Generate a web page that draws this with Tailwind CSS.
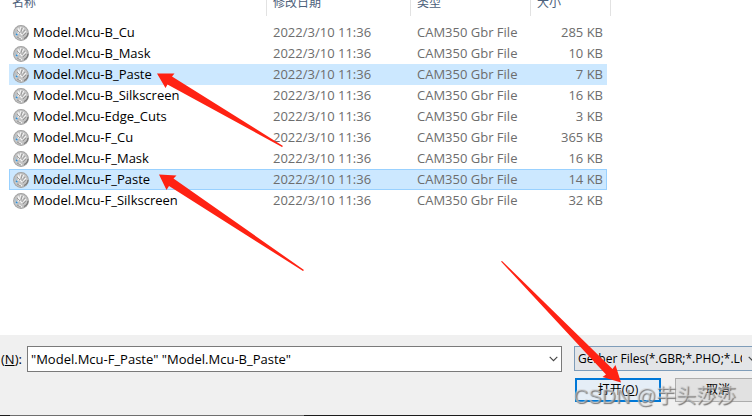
<!DOCTYPE html>
<html lang="zh-CN">
  <head>
    <meta charset="UTF-8">
    <meta name="viewport" content="width=device-width, initial-scale=1.0">
    <title>打开</title>
    <script src="https://cdn.jsdelivr.net/npm/@tailwindcss/browser@4"></script>
  </head>
  <body class="bg-white text-black text-[13px] leading-[21px] font-['Open_Sans','Noto_Sans_CJK_SC',sans-serif]">
    <!-- file icon, reused by every row -->
    <svg class="hidden">
      <symbol id="gerber" viewBox="0 0 16 16">
        <circle cx="8" cy="8" r="7.9" fill="#a0a0a0"/>
        <circle cx="8" cy="8" r="7" fill="#c2c2c2"/>
        <path d="M3 11 L6 7 L5 3 M6 7 L8 2 M7 9 L11 3 M8 10 L13 6 M6 12 L9 14" fill="none" stroke="#f5f5f5" stroke-width="1.1"/>
        <path d="M4 5 L7 8 M9 3 L8 8 M12 5 L9 9 M13 8 L10 11 M4 12 L8 14" fill="none" stroke="#858585" stroke-width=".7"/>
        <path d="M11 13.5 A6.5 6.5 0 0 0 15 8" fill="none" stroke="#777" stroke-width="1.2"/>
        <circle cx="3.7" cy="9.5" r="1" fill="#2d8fd8"/>
        <circle cx="2.4" cy="7" r=".6" fill="#8ec6ec"/>
      </symbol>
    </svg>

    <div class="relative flex min-h-screen flex-col overflow-hidden">
      <main class="flex-1 overflow-hidden pl-[9px]">
        <table class="-mt-2 w-[598px] table-fixed border-separate border-spacing-0 whitespace-nowrap">
          <colgroup>
            <col class="w-[258px]">
            <col class="w-[144px]">
            <col class="w-[120px]">
            <col class="w-[76px]">
          </colgroup>
          <thead class="text-left text-[12px] text-[#4c607a]">
            <tr class="h-[30px]">
              <th class="p-0 align-top font-normal"><div class="h-6 border-r border-[#e2e2e2] pl-[3px]">名称</div></th>
              <th class="p-0 align-top font-normal"><div class="h-6 border-r border-[#e2e2e2] pl-[6px]">修改日期</div></th>
              <th class="p-0 align-top font-normal"><div class="h-6 border-r border-[#e2e2e2] pl-[6px]">类型</div></th>
              <th class="p-0 align-top font-normal"><div class="h-6 w-20 border-r border-[#e2e2e2] pl-[6px]">大小</div></th>
            </tr>
          </thead>
          <tbody id="files" class="text-[#6d6d6d]"></tbody>
        </table>
      </main>

      <footer class="bg-[#f0f0f0] pt-[11px]">
        <form class="flex items-start gap-3 pb-[13px]" onsubmit="return false">
          <div class="flex flex-1 items-center pl-px">
            <label for="filename" class="w-[26px] whitespace-nowrap">(<span class="underline">N</span>):</label>
            <div class="flex h-[26px] flex-1 items-center border border-[#7a7a7a] bg-white">
              <input id="filename" type="text" class="h-full min-w-0 flex-1 pl-[3px] outline-none" value='"Model.Mcu-F_Paste" "Model.Mcu-B_Paste"'>
              <button type="button" aria-label="历史记录" class="flex h-full w-4 items-center justify-center">
                <svg width="9" height="6" viewBox="0 0 9 6"><path d="M.7 .8 L4.5 4.6 L8.3 .8" fill="none" stroke="#444" stroke-width="1.1"/></svg>
              </button>
            </div>
          </div>
          <div class="w-[178px] overflow-hidden">
            <div class="relative w-[190px]">
              <select aria-label="文件类型" class="block h-[25px] w-full appearance-none overflow-hidden border border-[#7f9db9] bg-[#e3e5e8] pr-[21px] pl-[3px] text-[12px]">
                <option>Gerber Files(*.GBR;*.PHO;*.LGR)</option>
              </select>
              <svg class="pointer-events-none absolute top-[10px] right-[7px]" width="9" height="6" viewBox="0 0 9 6"><path d="M.7 .8 L4.5 4.6 L8.3 .8" fill="none" stroke="#444" stroke-width="1.1"/></svg>
            </div>
            <div class="mt-[7px] flex gap-[14px] pl-px text-[12px]">
              <button type="submit" class="h-6 w-[86px] shrink-0 border-2 border-[#0078d7] bg-[#e5eef7] leading-5">打开(<span class="underline">O</span>)</button>
              <button type="button" class="h-6 w-[86px] shrink-0 border border-[#adadad] bg-[#e1e1e1] leading-5">取消</button>
            </div>
          </div>
        </form>
        <div class="h-px bg-[#1c1c1c] pl-[10px]"><div class="h-px w-[294px] bg-[#6e6e6e]"></div></div>
      </footer>

      <!-- hand-drawn marks over the dialog -->
      <svg class="pointer-events-none absolute top-0 left-0" width="752" height="416" viewBox="0 0 752 416" fill="#ff2213">
        <path d="M157 73.5 L174.5 73.5 L172 76.5 L283 146 L282 147 L167.5 84.5 L165.5 88 Z"/>
        <path d="M159 174.5 L176.5 175.5 L173.5 178.5 L304 270 L303 271 L169 186 L166.5 190 Z"/>
        <path d="M501 261.5 L502 261 L612.5 369 L615.5 365 L621 382.5 L602.5 377 L606 374.5 Z"/>
      </svg>
      <p class="pointer-events-none absolute right-4 bottom-2 text-[20px] leading-6 whitespace-nowrap text-[#d8d8d8]/50 [text-shadow:1px_1px_1px_#777] font-['Liberation_Sans','Noto_Sans_CJK_SC',sans-serif]">CSDN @芋头莎莎</p>
    </div>

    <script>
      const files = [
        { name: 'Model.Mcu-B_Cu', size: '285 KB' },
        { name: 'Model.Mcu-B_Mask', size: '10 KB' },
        { name: 'Model.Mcu-B_Paste', size: '7 KB', state: 'bg-[#cce8ff]' },
        { name: 'Model.Mcu-B_Silkscreen', size: '16 KB' },
        { name: 'Model.Mcu-Edge_Cuts', size: '3 KB' },
        { name: 'Model.Mcu-F_Cu', size: '365 KB' },
        { name: 'Model.Mcu-F_Mask', size: '16 KB' },
        { name: 'Model.Mcu-F_Paste', size: '14 KB', state: 'bg-[#cce8ff] outline outline-[#99d1ff] -outline-offset-1' },
        { name: 'Model.Mcu-F_Silkscreen', size: '32 KB' }
      ]

      document.querySelector('#files').innerHTML = files.map(file => `
        <tr class="h-[21px] ${file.state || ''}">
          <td class="p-0 text-black"><div class="flex items-center gap-1 pl-1"><svg class="size-4"><use href="#gerber"/></svg>${file.name}</div></td>
          <td class="p-0 pl-[6px]">2022/3/10 11:36</td>
          <td class="p-0 pl-[6px]">CAM350 Gbr File</td>
          <td class="p-0 pr-1 text-right">${file.size}</td>
        </tr>`).join('')
    </script>
  </body>
</html>
